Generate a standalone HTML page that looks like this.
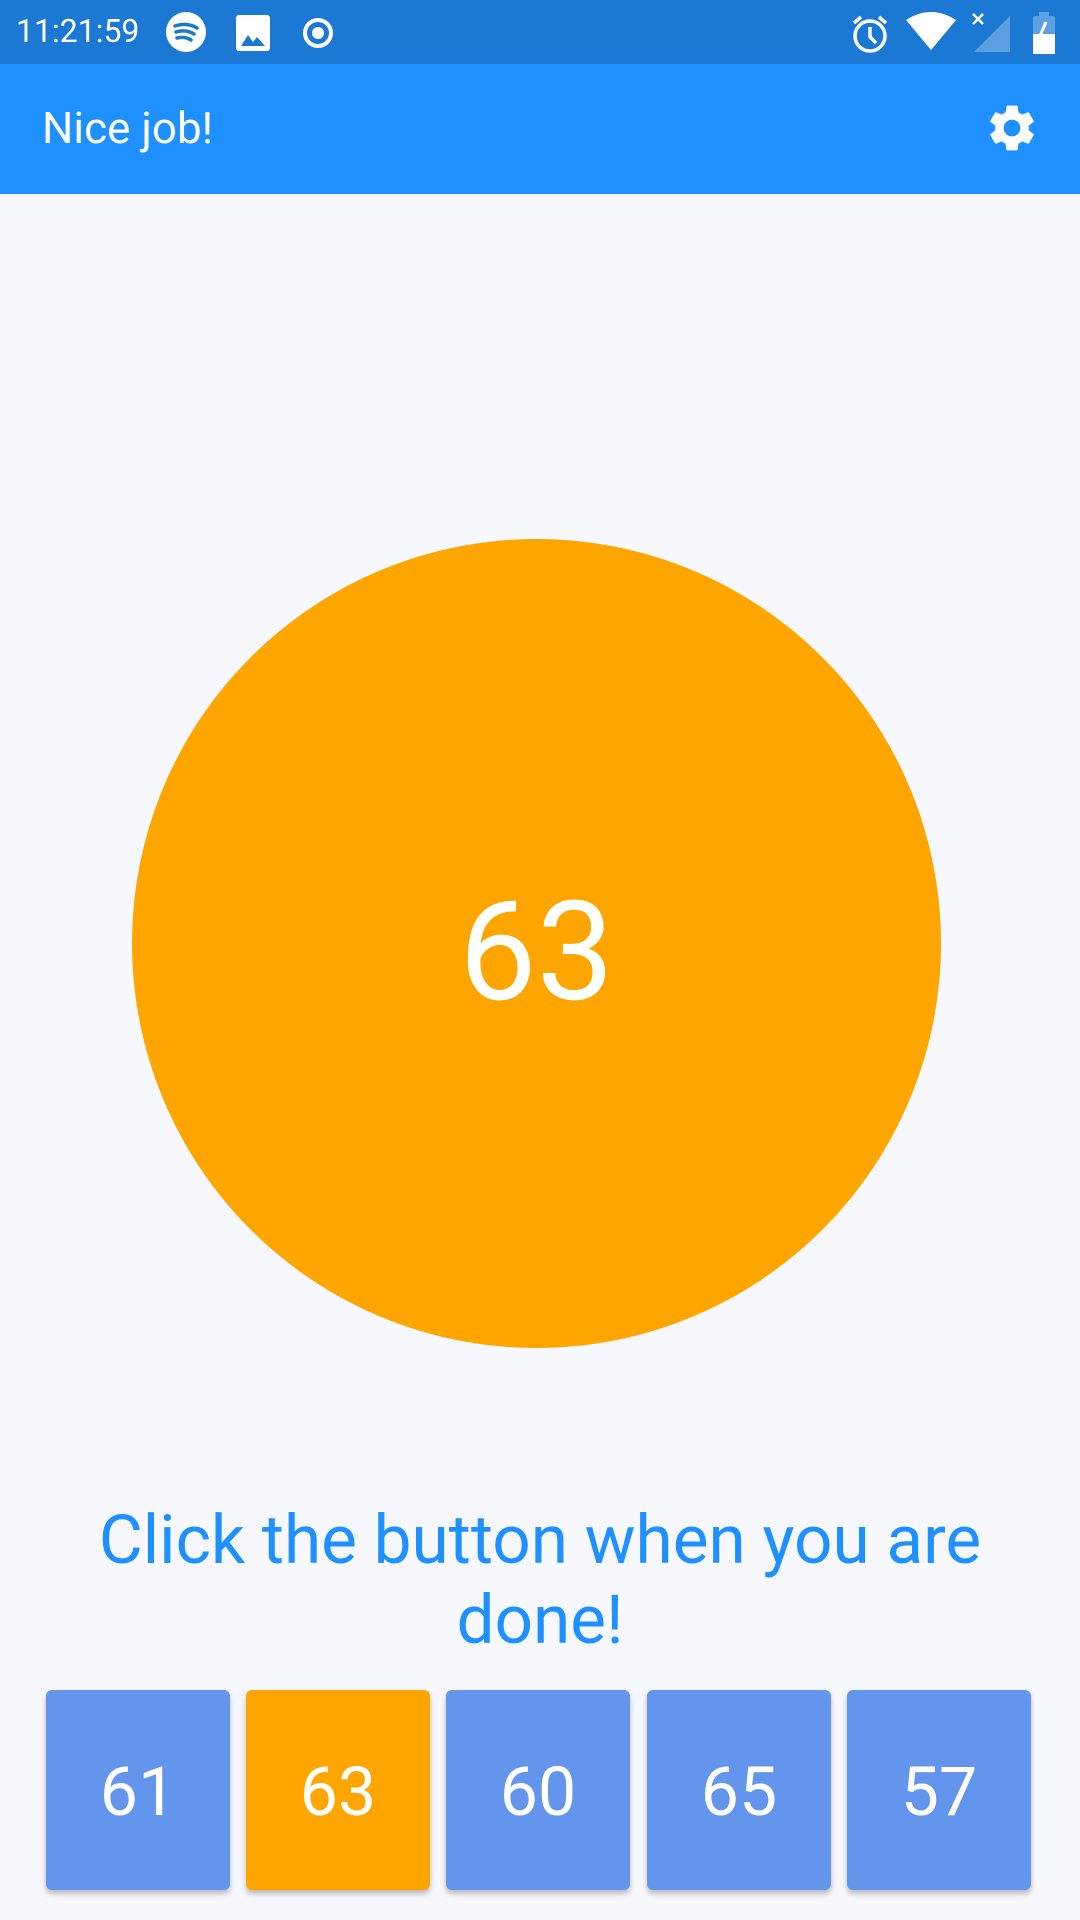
<!DOCTYPE html>
<html><head><meta charset="utf-8"><style>
*{margin:0;padding:0;box-sizing:border-box}
body{width:1080px;height:1920px;background:#f7f8fd;font-family:"Roboto","Liberation Sans",sans-serif;position:relative;overflow:hidden}
.sb{position:absolute;left:0;top:0;width:1080px;height:64px;background:#1b78d3;color:#fff}
.ab{position:absolute;left:0;top:64px;width:1080px;height:130px;background:#1e90ff;color:#fff}
.title{position:absolute;left:42px;top:38px;font-size:44px}
.circle{position:absolute;left:132px;top:539px;width:809px;height:809px;border-radius:50%;background:#ffa500;color:#fff;font-size:138px;display:flex;align-items:center;justify-content:center;padding-top:16px}
.msg{position:absolute;left:0;width:1080px;top:1501px;text-align:center;color:#1e90ff;font-size:67.5px;line-height:80px}
.btn{position:absolute;top:1690px;width:184px;height:200px;border-radius:6px;background:#6495ed;color:#fff;font-size:68px;display:flex;align-items:center;justify-content:center;padding-top:4px;box-shadow:0 4px 6px rgba(0,0,0,.25)}
</style></head><body>
<div class="sb">
<span style="position:absolute;left:16px;top:12px;font-size:32px">11:21:59</span>
<svg style="position:absolute;left:166px;top:12px" width="40" height="40" viewBox="0 0 40 40"><circle cx="20" cy="20" r="20" fill="#fff"/><path d="M9 14q12-4 22 2M10 20q10-3 18 2M11 26q8-2 14 2" stroke="#1b78d3" stroke-width="3.5" fill="none" stroke-linecap="round"/></svg>
<svg style="position:absolute;left:236px;top:15px" width="34" height="36" viewBox="0 0 34 36"><rect width="34" height="36" rx="3" fill="#fff"/><path d="M5 31 12 20 17 27 21 22 29 31Z" fill="#1b78d3"/></svg>
<svg style="position:absolute;left:302px;top:16px" width="32" height="34" viewBox="0 0 32 34"><circle cx="16" cy="17" r="13" stroke="#fff" stroke-width="4" fill="none"/><circle cx="16" cy="17" r="6" fill="#fff"/></svg>
<svg style="position:absolute;left:850px;top:13px" width="40" height="42" viewBox="0 0 40 42"><circle cx="20" cy="23" r="15" stroke="#fff" stroke-width="3.5" fill="none"/><path d="M20 14v10l6 6M4 10l7-6M36 10l-7-6" stroke="#fff" stroke-width="3.5" fill="none"/></svg>
<svg style="position:absolute;left:906px;top:12px" width="50" height="40" viewBox="0 0 50 40"><path d="M0 8Q25-8 50 8L25 38Z" fill="#fff"/></svg>
<svg style="position:absolute;left:970px;top:12px" width="40" height="40" viewBox="0 0 40 40"><path d="M40 4V40H4Z" fill="#5da0e0"/><path d="M3 2l10 10M13 2 3 12" stroke="#fff" stroke-width="2.5"/></svg>
<svg style="position:absolute;left:1032px;top:12px" width="24" height="42" viewBox="0 0 24 42"><rect x="7" y="0" width="10" height="5" fill="#5da0e0"/><rect x="1" y="4" width="22" height="38" rx="2" fill="#5da0e0"/><rect x="1" y="22" width="22" height="20" fill="#fff"/><path d="M14 10 8 24h6l-4 12" stroke="#fff" stroke-width="3" fill="none"/></svg>
</div>
<div class="ab"><div class="title">Nice job!</div>
<svg style="position:absolute;left:984px;top:36px" width="56" height="56" viewBox="0 0 24 24"><path fill="#fff" d="M19.14 12.94c.04-.3.06-.61.06-.94 0-.32-.02-.64-.07-.94l2.03-1.58a.49.49 0 0 0 .12-.61l-1.92-3.32a.488.488 0 0 0-.59-.22l-2.39.96c-.5-.38-1.03-.7-1.62-.94l-.36-2.54a.484.484 0 0 0-.48-.41h-3.84c-.24 0-.43.17-.47.41l-.36 2.54c-.59.24-1.13.57-1.62.94l-2.39-.96c-.22-.08-.47 0-.59.22L2.74 8.87c-.12.21-.08.47.12.61l2.03 1.58c-.05.3-.09.63-.09.94s.02.64.07.94l-2.03 1.58a.49.49 0 0 0-.12.61l1.92 3.32c.12.22.37.29.59.22l2.39-.96c.5.38 1.03.7 1.62.94l.36 2.54c.05.24.24.41.48.41h3.84c.24 0 .44-.17.47-.41l.36-2.54c.59-.24 1.13-.56 1.62-.94l2.39.96c.22.08.47 0 .59-.22l1.92-3.32c.12-.22.07-.47-.12-.61l-2.01-1.58zM12 15.6c-1.98 0-3.6-1.62-3.6-3.6s1.62-3.6 3.6-3.6 3.6 1.62 3.6 3.6-1.62 3.6-3.6 3.6z"/></svg>
</div>
<div class="circle">63</div>
<div class="msg">Click the button when you are<br>done!</div>
<div class="btn" style="left:46px">61</div>
<div class="btn" style="left:246px;background:#ffa500">63</div>
<div class="btn" style="left:446px">60</div>
<div class="btn" style="left:647px">65</div>
<div class="btn" style="left:847px">57</div>
</body></html>
